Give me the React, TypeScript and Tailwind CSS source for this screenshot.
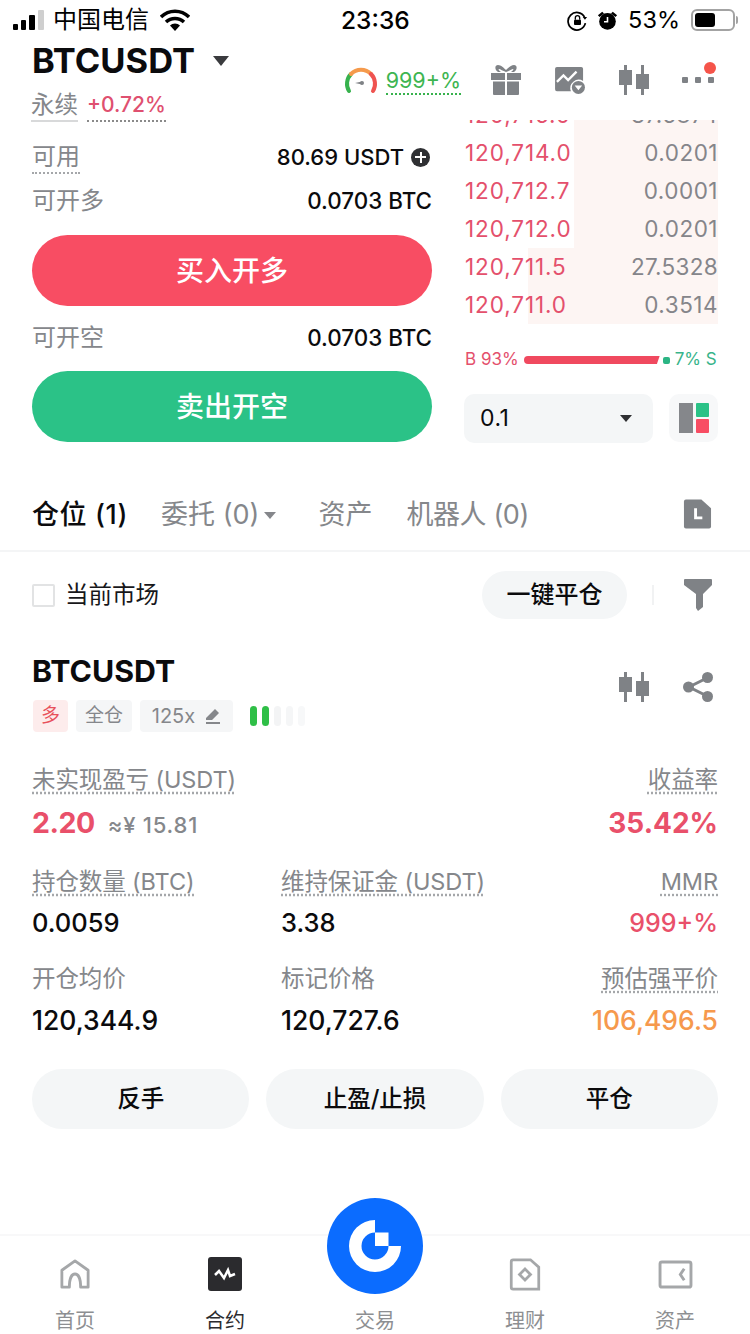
import type { ReactNode } from "react";

const FONT = "[font-family:Inter,'Noto_Sans_CJK_SC',sans-serif]";
const LABEL = "text-[23.5px] leading-[30px] tracking-[-0.1px] text-[#85878b]";
const DOTTED = "underline decoration-dotted decoration-[#a5a7aa] underline-offset-4";

function Candles({ className }: { className: string }) {
  return (
    <svg viewBox="0 0 30 30" className={className} fill="#7f8286">
      <path d="M5 0h3v5h5v15H8v10H5V20H0V5h5z" />
      <path d="M22 0h3v9h5v15h-5v6h-3v-6h-5V9h5z" />
    </svg>
  );
}

function Row({ price, size, depth, wide }: { price: string; size: string; depth: number; wide?: boolean }) {
  return (
    <div className="relative flex h-[38px] shrink-0 items-center justify-between">
      <div className="absolute inset-y-0 -right-[1px] bg-[#fdf5f3]" style={{ width: depth }} />
      <span className="relative text-[22.5px] tracking-[0.9px] text-[#e4506c]">{price}</span>
      <span className={`relative text-[22.5px] text-[#85858a] ${wide ? "tracking-[0.3px]" : "tracking-[0.5px]"}`}>{size}</span>
    </div>
  );
}

function Stat({ label, value, color, align, size, dotted }: { label: string; value: string; color?: string; align?: string; size: string; dotted?: boolean }) {
  return (
    <div className={`flex flex-col ${align ?? ""}`}>
      <span className={`${LABEL} ${dotted ? DOTTED : ""}`}>{label}</span>
      <span className={`mt-[11px] leading-[30px] font-medium ${size} ${color ?? "text-[#0b0b0d]"}`}>{value}</span>
    </div>
  );
}

function Tab({ label, icon, active }: { label: string; icon: ReactNode; active?: boolean }) {
  return (
    <div className="flex w-[150px] flex-col items-center pt-[16px]">
      <div className="flex h-[44px] items-center">{icon}</div>
      <span className={`mt-[12px] text-[20px] leading-[26px] ${active ? "text-[#2b2b2e]" : "text-[#8d8f92]"}`}>{label}</span>
    </div>
  );
}

export default function App() {
  return (
    <div className={`relative h-[1334px] w-[750px] overflow-hidden bg-white ${FONT}`}>
      {/* status bar */}
      <div className="flex h-[40px] items-center justify-between pl-[13px] pr-[12px] text-black">
        <div className="flex items-center">
          <div className="flex items-end gap-[3px]">
            <div className="h-[6px] w-[5px] rounded-[1px] bg-black" />
            <div className="h-[10px] w-[5px] rounded-[1px] bg-black" />
            <div className="h-[15px] w-[6px] rounded-[1px] bg-black" />
            <div className="h-[20px] w-[6px] rounded-[1px] bg-[#cfcfcf]" />
          </div>
          <span className="ml-[9px] text-[24px] leading-none">中国电信</span>
          <svg viewBox="0 0 30 22" className="ml-[11px] h-[22px] w-[30px]">
            <path d="M1 8a20 20 0 0 1 28 0M6 13a13 13 0 0 1 18 0" fill="none" stroke="#000" strokeWidth="3.5" />
            <path d="M10 16.5a7 7 0 0 1 10 0L15 22z" fill="#000" />
          </svg>
        </div>
        <span className="absolute left-[341px] text-[24.5px] font-medium leading-none">23:36</span>
        <div className="flex items-center">
          <svg viewBox="0 0 24 24" className="h-[21px] w-[21px]" fill="none" stroke="#000" strokeWidth="2">
            <path d="M20 8A10 10 0 1 0 21 15" />
            <path d="M18 8h5l-2.5 3z" fill="#000" stroke="none" />
            <rect x="8" y="11" width="8" height="6" rx="1" fill="#000" stroke="none" />
            <path d="M9.5 11V9a2.5 2.5 0 0 1 5 0v2" strokeWidth="1.5" />
          </svg>
          <svg viewBox="0 0 24 24" className="ml-[9px] h-[21px] w-[21px]">
            <circle cx="12" cy="13" r="9.5" fill="#000" />
            <path d="M12 8v5.5H8" fill="none" stroke="#fff" strokeWidth="1.8" />
            <path d="M1 6l5-4 2 2-5 4zM23 6l-5-4-2 2 5 4z" fill="#000" />
          </svg>
          <span className="ml-[10px] text-[23.5px] leading-none">53%</span>
          <div className="ml-[11px] flex h-[22px] w-[44px] items-center rounded-[6px] border-2 border-[#a3a3a3] p-[2px]">
            <div className="h-full w-[20px] rounded-[3px] bg-black" />
          </div>
          <div className="ml-[1px] h-[8px] w-[2px] rounded-r bg-[#a3a3a3]" />
        </div>
      </div>

      {/* symbol header */}
      <div className="flex h-[80px] items-start justify-between pl-[32px] pr-[36px]">
        <div>
          <div className="flex h-[42px] items-center">
            <span className="text-[34.5px] font-bold leading-none text-[#0b0b0d]">BTCUSDT</span>
            <div className="ml-[18px] h-0 w-0 border-x-[8px] border-t-[10px] border-x-transparent border-t-[#3a3b3e]" />
          </div>
          <div className="mt-[8px] flex items-center">
            <span className="-ml-[1px] border-b-2 border-[#d8d9da] text-[23.5px] leading-[30px] text-[#85878b]">永续</span>
            <span className="ml-[9px] border-b-2 border-dotted border-[#8a8a8a] text-[21px] font-medium leading-[30px] text-[#df5070]">+0.72%</span>
          </div>
        </div>
        <div className="mt-[26px] flex items-center">
          <svg viewBox="0 0 34 30" className="h-[30px] w-[34px]" fill="none" strokeWidth="4" strokeLinecap="round">
            <path d="M5 25A14 14 0 0 1 7 8" stroke="#37b24d" />
            <path d="M7 8A14 14 0 0 1 27 8" stroke="#f59a4c" />
            <path d="M27 8a14 14 0 0 1 2 17" stroke="#ef5350" />
            <path d="M11 17l7-1.5v3z" fill="#7f8286" stroke="none" />
            <circle cx="18" cy="17" r="2" fill="#7f8286" stroke="none" />
          </svg>
          <span className="ml-[8px] border-b-2 border-dotted border-[#37b24d] text-[21.5px] leading-[26px] text-[#3db551]">999+%</span>
          <svg viewBox="0 0 30 30" className="-mt-[2px] ml-[30px] h-[30px] w-[30px]" fill="#7f8286">
            <path d="M0 8h14v7H0zM16 8h14v7H16zM2 16.5h12V30H3a1 1 0 0 1-1-1zM16 16.5h12V29a1 1 0 0 1-1 1H16z" />
            <path d="M7 7C3 4 4 0 7 0c3 0 6 3 8 5 2-2 5-5 8-5 3 0 4 4 0 7h-3c2-1 3-3 2-3-1 0-4 2-7 3-3-1-6-3-7-3-1 0 0 2 2 3z" />
          </svg>
          <svg viewBox="0 0 34 30" className="-mt-[2px] ml-[32px] h-[28px] w-[34px]">
            <path d="M3 1h26a2 2 0 0 1 2 2v13a9 9 0 0 0-13 11H3a2 2 0 0 1-2-2V3a2 2 0 0 1 2-2z" fill="#7f8286" />
            <path d="M3 17l7-7 5 5 9-9" fill="none" stroke="#fff" strokeWidth="2.5" />
            <circle cx="26" cy="23" r="7" fill="#7f8286" />
            <path d="M22 21h8l-4 5z" fill="#fff" />
          </svg>
          <Candles className="-mt-[2px] ml-[32px] h-[30px] w-[30px]" />
          <div className="relative -mt-[2px] ml-[33px] flex w-[32px] justify-between">
            <div className="h-[6px] w-[6px] rounded-[1px] bg-[#7f8286]" />
            <div className="h-[6px] w-[6px] rounded-[1px] bg-[#7f8286]" />
            <div className="h-[6px] w-[6px] rounded-[1px] bg-[#7f8286]" />
            <div className="absolute -right-[2px] -top-[15px] h-[12px] w-[12px] rounded-full bg-[#f5544a]" />
          </div>
        </div>
      </div>

      {/* trade panel */}
      <div className="flex pl-[32px] pr-[32px]">
        <div className="w-[400px] pt-[16px]">
          <div className="flex h-[38px] items-end justify-between">
            <span className="border-b-2 border-dotted border-[#a5a7aa] text-[24px] leading-[30px] text-[#85878b]">可用</span>
            <div className="flex items-center pb-[3px] pr-[2px]">
              <span className="text-[22px] leading-[28px] font-medium text-[#0b0b0d]">80.69 USDT</span>
              <div className="relative ml-[7px] h-[19px] w-[19px] rounded-full bg-[#2f3033]">
                <div className="absolute left-[4px] top-[8.5px] h-[2px] w-[11px] bg-white" />
                <div className="absolute left-[8.5px] top-[4px] h-[11px] w-[2px] bg-white" />
              </div>
            </div>
          </div>
          <div className="mt-[12px] flex h-[30px] items-center justify-between">
            <span className="text-[24px] text-[#85878b]">可开多</span>
            <span className="text-[22.4px] font-medium text-[#0b0b0d]">0.0703 BTC</span>
          </div>
          <button className="mt-[19px] flex h-[71px] w-full items-center justify-center rounded-[36px] bg-[#f84d63] text-[28px] font-medium text-white">买入开多</button>
          <div className="mt-[17px] flex h-[30px] items-center justify-between">
            <span className="text-[24px] text-[#85878b]">可开空</span>
            <span className="text-[22.4px] font-medium text-[#0b0b0d]">0.0703 BTC</span>
          </div>
          <button className="mt-[18px] flex h-[71px] w-full items-center justify-center rounded-[36px] bg-[#2bc287] text-[28px] font-medium text-white">卖出开空</button>
        </div>

        <div className="ml-[33px] flex w-[253px] flex-col">
          <div className="flex h-[204px] flex-col justify-end overflow-hidden">
            <Row price="120,716.0" size="37.6874" depth={145} />
            <Row price="120,714.0" size="0.0201" depth={145} />
            <Row price="120,712.7" size="0.0001" depth={145} />
            <Row price="120,712.0" size="0.0201" depth={145} />
            <Row price="120,711.5" size="27.5328" depth={191} wide />
            <Row price="120,711.0" size="0.3514" depth={191} />
          </div>
          <div className="mt-[25px] flex h-[22px] items-center text-[17px]">
            <span className="text-[#e4506c]">B 93%</span>
            <div className="ml-[5px] h-[8px] w-[136px] rounded-l-full bg-[#f0495f] [clip-path:polygon(0_0,100%_0,98%_100%,0_100%)]" />
            <div className="ml-[3px] h-[7px] w-[7px] rounded-[2px] bg-[#2bb584]" />
            <span className="ml-[5px] text-[#38b48a]">7% S</span>
          </div>
          <div className="mt-[23px] flex gap-[16px]">
            <div className="-ml-[1px] flex h-[49px] w-[190px] items-center justify-between rounded-[10px] bg-[#f4f6f7] pl-[16px] pr-[21px]">
              <span className="text-[23px] tracking-[0.5px] text-[#0b0b0d]">0.1</span>
              <div className="h-0 w-0 border-x-[6px] border-t-[7px] border-x-transparent border-t-[#2f3033]" />
            </div>
            <div className="flex h-[48px] w-[49px] items-center justify-center gap-[3px] rounded-[10px] bg-[#f7f8f9]">
              <div className="h-[30px] w-[14px] bg-[#85878b]" />
              <div className="flex h-[30px] flex-col gap-[2px]">
                <div className="h-[14px] w-[13px] rounded-[1px] bg-[#2bc287]" />
                <div className="h-[14px] w-[13px] rounded-[1px] bg-[#f84d63]" />
              </div>
            </div>
          </div>
        </div>
      </div>

      {/* position tabs */}
      <div className="mt-[52px] flex h-[57px] items-start border-b-2 border-[#f4f5f6] pl-[32px] pr-[38px]">
        <div className="flex h-[40px] items-center text-[27px]">
          <span className="font-medium tracking-[0.6px] text-[#0b0b0d]">仓位 (1)</span>
          <span className="ml-[33px] text-[#85878b]">委托 (0)</span>
          <div className="ml-[5px] h-0 w-0 border-x-[6px] border-t-[7px] border-x-transparent border-t-[#85878b]" />
          <span className="ml-[42px] text-[#85878b]">资产</span>
          <span className="ml-[34px] tracking-[-0.4px] text-[#85878b]">机器人 (0)</span>
        </div>
        <svg viewBox="0 0 30 32" className="ml-auto mt-[3px] h-[32px] w-[29px]">
          <path d="M3 1h16l10 9v19a2 2 0 0 1-2 2H3a2 2 0 0 1-2-2V3a2 2 0 0 1 2-2z" fill="#7f8286" />
          <path d="M13 10v10h7" fill="none" stroke="#fff" strokeWidth="3" />
        </svg>
      </div>

      {/* filter row */}
      <div className="mt-[19px] flex h-[48px] items-center pl-[32px] pr-[38px]">
        <div className="h-[23px] w-[23px] rounded-[2px] border-2 border-[#e2e3e4]" />
        <span className="ml-[10px] text-[23.5px] text-[#17171a]">当前市场</span>
        <div className="ml-auto flex h-[48px] w-[145px] items-center justify-center rounded-full bg-[#f4f6f7] text-[24px] font-medium text-[#0b0b0d]">一键平仓</div>
        <div className="ml-[25px] h-[20px] w-[2px] bg-[#f1f2f3]" />
        <svg viewBox="0 0 28 32" className="ml-[30px] h-[32px] w-[28px]" fill="#7f8286">
          <path d="M1 0h26a1 1 0 0 1 1 1v5l-9 9v13l-5 4-2-3V15L0 6V1a1 1 0 0 1 1-1z" />
        </svg>
      </div>

      {/* position card */}
      <div className="px-[32px]">
        <div className="mt-[35px] flex justify-between">
          <div>
            <div className="-mt-[1px] text-[30.3px] font-bold leading-[36px] text-[#0b0b0d]">BTCUSDT</div>
            <div className="ml-[1px] mt-[11px] flex items-center">
              <div className="flex h-[32px] w-[35px] items-center justify-center rounded-[4px] bg-[#fdecec] text-[19px] text-[#e8505b]">多</div>
              <div className="ml-[8px] flex h-[32px] w-[56px] items-center justify-center rounded-[4px] bg-[#f5f6f7] text-[19px] text-[#85878b]">全仓</div>
              <div className="ml-[8px] flex h-[32px] w-[93px] items-center justify-center gap-[10px] rounded-[4px] bg-[#f5f6f7] text-[20px] text-[#85878b]">
                125x
                <svg viewBox="0 0 16 16" className="h-[16px] w-[16px]" fill="#85878b">
                  <path d="M10 1l4 4-7 7H1v-2zM1 14h14v2H1z" />
                </svg>
              </div>
              <div className="ml-[17px] flex gap-[5px]">
                <div className="h-[20px] w-[7px] rounded-full bg-[#2fbf47]" />
                <div className="h-[20px] w-[7px] rounded-full bg-[#2fbf47]" />
                <div className="h-[20px] w-[7px] rounded-full bg-[#f3f4f5]" />
                <div className="h-[20px] w-[7px] rounded-full bg-[#f5f6f7]" />
                <div className="h-[20px] w-[7px] rounded-full bg-[#f7f8f9]" />
              </div>
            </div>
          </div>
          <div className="mt-[18px] flex items-start pr-[5px]">
            <Candles className="h-[30px] w-[30px]" />
            <svg viewBox="0 0 30 30" className="ml-[34px] h-[30px] w-[30px]" fill="#7f8286">
              <path d="M24 6L6 15l18 9" fill="none" stroke="#7f8286" strokeWidth="3" />
              <circle cx="24.5" cy="5.5" r="5.5" />
              <circle cx="5.5" cy="15" r="5.5" />
              <circle cx="24.5" cy="24.5" r="5.5" />
            </svg>
          </div>
        </div>

        <div className="mt-[33px] flex justify-between">
          <div>
            <span className={`${LABEL} ${DOTTED}`}>未实现盈亏 (USDT)</span>
            <div className="mt-[10px] flex items-baseline">
              <span className="text-[28.5px] font-bold leading-[36px] tracking-[-0.5px] text-[#e9506a]">2.20</span>
              <span className="ml-[13px] text-[22px] font-medium tracking-[0.8px] text-[#85878b]">≈¥ 15.81</span>
            </div>
          </div>
          <div className="flex flex-col items-end">
            <span className={`${LABEL} ${DOTTED}`}>收益率</span>
            <span className="mt-[10px] text-[28px] font-bold leading-[36px] text-[#e9506a]">35.42%</span>
          </div>
        </div>

        <div className="mt-[25px] flex">
          <div className="w-[249px]"><Stat dotted size="text-[25.5px]" label="持仓数量 (BTC)" value="0.0059" /></div>
          <Stat dotted size="text-[25.5px]" label="维持保证金 (USDT)" value="3.38" />
          <div className="ml-auto"><Stat dotted size="text-[25px]" label="MMR" value="999+%" color="text-[#e9506a]" align="items-end" /></div>
        </div>

        <div className="mt-[26px] flex">
          <div className="w-[249px]"><Stat size="text-[26.5px]" label="开仓均价" value="120,344.9" /></div>
          <Stat size="text-[26.5px]" label="标记价格" value="120,727.6" />
          <div className="ml-auto"><Stat dotted size="text-[26.5px]" label="预估强平价" value="106,496.5" color="text-[#f6994d]" align="items-end" /></div>
        </div>

        <div className="mt-[34px] grid grid-cols-3 gap-[17px]">
          <div className="flex h-[60px] items-center justify-center rounded-full bg-[#f4f6f7] text-[23.5px] font-medium text-[#0b0b0d]">反手</div>
          <div className="flex h-[60px] items-center justify-center rounded-full bg-[#f4f6f7] text-[23.5px] font-medium text-[#0b0b0d]">止盈/止损</div>
          <div className="flex h-[60px] items-center justify-center rounded-full bg-[#f4f6f7] text-[23.5px] font-medium text-[#0b0b0d]">平仓</div>
        </div>
      </div>

      {/* bottom nav */}
      <div className="absolute inset-x-0 bottom-0 flex h-[100px] border-t-2 border-[#f8f8f9]">
        <Tab
          label="首页"
          icon={
            <svg viewBox="0 0 32 32" className="h-[30px] w-[32px]" fill="none" stroke="#a5a7a9" strokeWidth="3">
              <path d="M2 30V12L16 2l14 10v18h-8c0-10-3-14-6-14s-6 4-6 14z" strokeLinejoin="round" />
            </svg>
          }
        />
        <Tab
          active
          label="合约"
          icon={
            <svg viewBox="0 0 34 34" className="h-[34px] w-[34px]">
              <rect width="34" height="34" rx="3" fill="#2b2b2e" />
              <path d="M7 18l4-4 5 7 4-8 2 6 5-2" fill="none" stroke="#fff" strokeWidth="2.5" />
            </svg>
          }
        />
        <Tab label="交易" icon={<div className="h-[34px]" />} />
        <Tab
          label="理财"
          icon={
            <svg viewBox="0 0 34 36" className="h-[33px] w-[32px]" fill="none" stroke="#a5a7a9" strokeWidth="3">
              <path d="M4 2h19l9 8v24H4a2 2 0 0 1-2-2V4a2 2 0 0 1 2-2z" />
              <path d="M17 12l6 6-6 6-6-6z" />
            </svg>
          }
        />
        <Tab
          label="资产"
          icon={
            <svg viewBox="0 0 36 30" className="h-[29px] w-[35px]" fill="none" stroke="#a5a7a9" strokeWidth="3">
              <rect x="2" y="2" width="32" height="26" rx="2" />
              <path d="M27 9l-4 6 4 6" />
            </svg>
          }
        />
      </div>
      <div className="absolute left-[327px] top-[1198px] flex h-[96px] w-[96px] items-center justify-center rounded-full bg-[#0b6cff]">
        <svg viewBox="0 0 52 52" className="h-[52px] w-[52px]">
          <path d="M26 0A26 26 0 1 0 52 26H39.5A13.5 13.5 0 1 1 26 12.5z" fill="#fff" />
          <rect x="26" y="12.5" width="13.5" height="13.5" fill="#fff" />
        </svg>
      </div>
    </div>
  );
}
